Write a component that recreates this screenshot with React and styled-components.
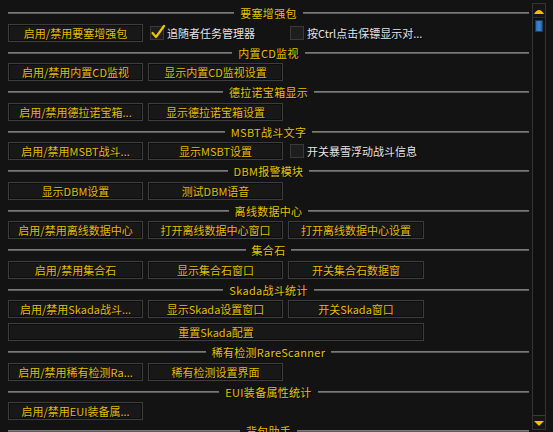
import React from 'react';
import styled, { createGlobalStyle } from 'styled-components';

const GlobalStyle = createGlobalStyle`
  html, body {
    margin: 0;
    padding: 0;
    background: #131313;
  }
  body {
    font-family: "Noto Sans CJK SC", "Liberation Sans", sans-serif;
  }
`;

const Page = styled.div`
  display: flex;
  height: 432px;
  overflow: hidden;
  background: #131313;
`;

const Content = styled.div`
  width: 521px;
  padding: 2.5px 0 0 8px;
  display: flex;
  flex-direction: column;
`;

const Section = styled.section`
  display: flex;
  flex-direction: column;
  gap: 5px;
  padding-bottom: 0.5px;
`;

const Title = styled.div`
  display: flex;
  align-items: center;
  height: 21px;
  margin-bottom: -5px;
  font-size: 11px;
  letter-spacing: 0.3px;
  color: #e8c200;
  text-shadow: 1px 1px 0 #000;
  white-space: nowrap;

  &::before,
  &::after {
    content: '';
    flex: 1;
    height: 2px;
    background: #5c5c5c;
    border-top: 1px solid #7a7a7a;
    box-sizing: border-box;
  }
  &::before {
    margin-right: 6px;
  }
  &::after {
    margin-left: 6px;
  }
`;

const Row = styled.div`
  display: grid;
  grid-template-columns: ${(p) => (p.$wide ? '416px' : '135px 135px 136px')};
  column-gap: 5px;
  height: 18px;
`;

const Button = styled.button`
  box-sizing: border-box;
  height: 18px;
  padding: 0 4px;
  margin: 0;
  border: 1px solid #3e3e3e;
  background: #181818;
  box-shadow: inset 0 0 0 1px #0d0d0d;
  color: #e4bd00;
  font-family: "Noto Sans CJK SC", "Liberation Sans", sans-serif;
  font-size: 11px;
  line-height: 16px;
  text-shadow: 1px 1px 0 #000;
  white-space: nowrap;
  overflow: hidden;
  cursor: pointer;
`;

const Check = styled.label`
  display: flex;
  align-items: center;
  gap: 3px;
  padding-left: 2px;
  font-size: 11px;
  color: #e6e6e6;
  text-shadow: 1px 1px 0 #000;
  white-space: nowrap;
`;

const Box = styled.span`
  position: relative;
  box-sizing: border-box;
  width: 14px;
  height: 14px;
  border: 1px solid #3a3a3a;
  background: #1e1e1e;
  flex-shrink: 0;
`;

const Mark = styled.svg`
  position: absolute;
  left: -1px;
  top: -3px;
`;

const Scrollbar = styled.div`
  margin: 3px 0 2px 3px;
  width: 14px;
  box-sizing: border-box;
  border: 1px solid #343434;
  background: #101010;
  display: flex;
  flex-direction: column;
  align-items: center;
`;

const Arrow = styled.div`
  width: 12px;
  height: 13px;
  display: flex;
  align-items: center;
  justify-content: center;
  border-bottom: ${(p) => (p.$down ? 'none' : '1px solid #2a2a2a')};
  border-top: ${(p) => (p.$down ? '1px solid #3a3a3a' : 'none')};
  margin-top: ${(p) => (p.$down ? 'auto' : '0')};
  background: #161616;
`;

const Thumb = styled.div`
  width: 8px;
  height: 12px;
  margin-top: 2px;
  background: linear-gradient(90deg, #2c6fb5, #3b86d0, #2a66a6);
  border: 1px solid #1a3d66;
  box-sizing: border-box;
`;

const CheckBox = ({ checked, children }) => (
  <Check>
    <Box>
      {checked && (
        <Mark width="16" height="16" viewBox="0 0 16 16">
          <path d="M2.5 9 L6 13 L14 2" fill="none" stroke="#f2c400" strokeWidth="2.2" strokeLinecap="round" strokeLinejoin="round" />
        </Mark>
      )}
    </Box>
    {children}
  </Check>
);

const sections = [
  {
    title: '要塞增强包',
    rows: [[{ b: '启用/禁用要塞增强包' }, { c: '追随者任务管理器', checked: true }, { c: '按Ctrl点击保镖显示对...' }]],
  },
  { title: '内置CD监视', rows: [[{ b: '启用/禁用内置CD监视' }, { b: '显示内置CD监视设置' }]] },
  { title: '德拉诺宝箱显示', rows: [[{ b: '启用/禁用德拉诺宝箱...' }, { b: '显示德拉诺宝箱设置' }]] },
  { title: 'MSBT战斗文字', rows: [[{ b: '启用/禁用MSBT战斗...' }, { b: '显示MSBT设置' }, { c: '开关暴雪浮动战斗信息' }]] },
  { title: 'DBM报警模块', rows: [[{ b: '显示DBM设置' }, { b: '测试DBM语音' }]] },
  {
    title: '离线数据中心',
    rows: [[{ b: '启用/禁用离线数据中心' }, { b: '打开离线数据中心窗口' }, { b: '打开离线数据中心设置' }]],
  },
  { title: '集合石', rows: [[{ b: '启用/禁用集合石' }, { b: '显示集合石窗口' }, { b: '开关集合石数据窗' }]] },
  {
    title: 'Skada战斗统计',
    rows: [
      [{ b: '启用/禁用Skada战斗...' }, { b: '显示Skada设置窗口' }, { b: '开关Skada窗口' }],
      [{ b: '重置Skada配置', wide: true }],
    ],
  },
  { title: '稀有检测RareScanner', rows: [[{ b: '启用/禁用稀有检测Ra...' }, { b: '稀有检测设置界面' }]] },
  { title: 'EUI装备属性统计', rows: [[{ b: '启用/禁用EUI装备属...' }]] },
  { title: '背包助手', rows: [] },
];

export default function App() {
  return (
    <Page>
      <GlobalStyle />
      <Content>
        {sections.map((s) => (
          <Section key={s.title}>
            <Title>{s.title}</Title>
            {s.rows.map((row, i) => (
              <Row key={i} $wide={row[0].wide}>
                {row.map((item, j) =>
                  item.b ? (
                    <Button key={j}>{item.b}</Button>
                  ) : (
                    <CheckBox key={j} checked={item.checked}>
                      {item.c}
                    </CheckBox>
                  )
                )}
              </Row>
            ))}
          </Section>
        ))}
      </Content>
      <Scrollbar>
        <Arrow>
          <svg width="10" height="6" viewBox="0 0 10 6">
            <path d="M0 6 Q5 -2 10 6 Z" fill="#f0c000" />
          </svg>
        </Arrow>
        <Thumb />
        <Arrow $down>
          <svg width="10" height="6" viewBox="0 0 10 6">
            <path d="M0 1 L10 1 L5 6 Z" fill="#f0c000" />
          </svg>
        </Arrow>
      </Scrollbar>
    </Page>
  );
}
